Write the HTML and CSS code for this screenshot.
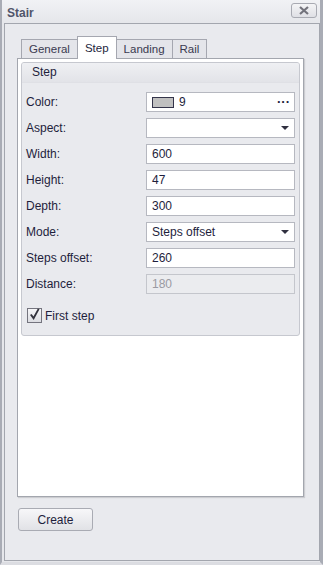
FILE: index.html
```html
<!DOCTYPE html>
<html lang="en">
<head>
  <meta charset="UTF-8">
  <title>Stair</title>
  <link rel="stylesheet" href="styles.css">
</head>
<body>
  <div class="window">
    <div class="titlebar">
      <span class="title">Stair</span>
      <button class="close-btn" aria-label="Close">
        <svg width="12" height="9" viewBox="0 0 12 9"><path d="M2 1 L10 8 M10 1 L2 8" stroke="#73737c" stroke-width="2.2" fill="none"/></svg>
      </button>
    </div>

    <div class="panel">
      <div class="tabs">
        <div class="tab">General</div>
        <div class="tab active">Step</div>
        <div class="tab">Landing</div>
        <div class="tab">Rail</div>
      </div>

      <div class="tab-page">
        <div class="group">
          <div class="group-header">Step</div>
          <div class="group-body">
            <div class="row">
              <label>Color:</label>
              <div class="field">
                <span class="swatch"></span><span class="field-text">9</span>
                <span class="dots">&middot;&middot;&middot;</span>
              </div>
            </div>
            <div class="row">
              <label>Aspect:</label>
              <div class="field"><span class="field-text"></span><span class="arrow"></span></div>
            </div>
            <div class="row">
              <label>Width:</label>
              <div class="field"><span class="field-text">600</span></div>
            </div>
            <div class="row">
              <label>Height:</label>
              <div class="field"><span class="field-text">47</span></div>
            </div>
            <div class="row">
              <label>Depth:</label>
              <div class="field"><span class="field-text">300</span></div>
            </div>
            <div class="row">
              <label>Mode:</label>
              <div class="field"><span class="field-text">Steps offset</span><span class="arrow"></span></div>
            </div>
            <div class="row">
              <label>Steps offset:</label>
              <div class="field"><span class="field-text">260</span></div>
            </div>
            <div class="row">
              <label>Distance:</label>
              <div class="field disabled"><span class="field-text">180</span></div>
            </div>
            <div class="check-row">
              <span class="checkbox">
                <svg width="14" height="14" viewBox="0 0 14 14"><path d="M3 7.5 L6 11.5 L11.5 1.5" stroke="#33333d" stroke-width="2" fill="none"/></svg>
              </span>
              <span>First step</span>
            </div>
          </div>
        </div>
      </div>

      <div class="actions">
        <button class="create-btn">Create</button>
      </div>
    </div>
  </div>
</body>
</html>
```

FILE: styles.css
```css
body {
  margin: 0;
  padding: 0;
  font-family: "Liberation Sans", Arial, sans-serif;
  font-size: 11px;
  color: #1e1e3c;
  background-color: #e6e7eb;
}

.window {
  width: 323px;
  height: 565px;
  box-sizing: border-box;
  border-left: 2px solid #a9acb5;
  border-right: 3px solid #a9acb5;
  border-bottom: 3px solid #dcdde2;
  padding: 0 0 1px 2px;
  display: flex;
  flex-direction: column;
  background: linear-gradient(#f1f2f5, #e6e7eb 22px);
}

.titlebar {
  height: 23px;
  display: flex;
  align-items: center;
  justify-content: space-between;
  padding: 0 3px 0 3px;
  box-sizing: border-box;
}

.title {
  font-weight: bold;
  font-size: 12px;
  color: #51556a;
  margin-top: 2px;
}

.close-btn {
  width: 26px;
  height: 15px;
  padding: 0;
  border: 1px solid #a8aab2;
  border-radius: 3px;
  background: linear-gradient(#f4f4f6, #dfe0e5);
  display: flex;
  align-items: center;
  justify-content: center;
  margin-bottom: 3px;
}

.panel {
  flex: 1;
  border: 1px solid #a3a6ae;
  background-color: #e9eaee;
  padding: 0 15px 0 12px;
  display: flex;
  flex-direction: column;
}

.tabs {
  display: flex;
  padding-left: 4px;
  margin-top: 14px;
  height: 20px;
  align-items: flex-end;
}

.tab {
  height: 19px;
  box-sizing: border-box;
  border: 1px solid #a5a7b0;
  border-bottom: none;
  margin-right: -1px;
  background-color: #e4e5ea;
  font-size: 11.5px;
  color: #3a3a50;
  padding: 3px 7px 0 7px;
}

.tab.active {
  height: 23px;
  background-color: #fff;
  color: #1e1e3c;
  padding-top: 5px;
  margin-bottom: -1px;
  position: relative;
  z-index: 1;
}

.tab-page {
  height: 439px;
  box-sizing: border-box;
  border: 1px solid #a3a6ae;
  background-color: #fff;
  box-shadow: 1px 1px 1px rgba(0, 0, 0, 0.12);
  padding: 3px;
}

.group {
  border: 1px solid #c6c8cf;
  border-radius: 3px;
  background-color: #e9eaee;
  overflow: hidden;
}

.group-header {
  height: 19px;
  line-height: 19px;
  padding-left: 10px;
  font-size: 12px;
  background: linear-gradient(#eff0f3, #e2e3e8);
  border-bottom: 1px solid #dfe0e5;
}

.group-body {
  padding: 9px 4px 12px 4px;
}

.row {
  display: flex;
  align-items: center;
  justify-content: space-between;
  height: 20px;
  margin-bottom: 6px;
}

.row label {
  font-size: 12px;
}

.field {
  width: 149px;
  height: 20px;
  box-sizing: border-box;
  border: 1px solid #b6b8c0;
  background-color: #fff;
  display: flex;
  align-items: center;
  padding: 0 4px 0 5px;
  font-size: 12px;
}

.field.disabled {
  background-color: #ebecef;
  border-color: #c4c6cc;
  color: #9a9aa2;
}

.field-text {
  flex: 1;
}

.swatch {
  width: 20px;
  height: 9px;
  border: 1px solid #34344a;
  background-color: #c0c0c0;
  margin-right: 5px;
}

.dots {
  font-weight: bold;
  font-size: 13px;
  line-height: 10px;
}

.arrow {
  width: 0;
  height: 0;
  border-left: 4px solid transparent;
  border-right: 4px solid transparent;
  border-top: 4px solid #303040;
  margin-right: 1px;
}

.check-row {
  display: flex;
  align-items: center;
  gap: 3px;
  font-size: 12px;
  margin-top: 14px;
  padding-left: 1px;
}

.checkbox {
  width: 13px;
  height: 13px;
  border: 1px solid #74747e;
  background: linear-gradient(#f6f6f8, #dcdde2);
  display: flex;
}

.checkbox svg {
  margin-top: -2px;
}

.actions {
  padding-top: 11px;
}

.create-btn {
  width: 75px;
  height: 23px;
  font-family: "Liberation Sans", Arial, sans-serif;
  font-size: 12px;
  color: #1e1e3c;
  border: 1px solid #a9abb3;
  border-radius: 3px;
  background: linear-gradient(#f7f7f9, #e1e2e6);
  margin-left: 1px;
  padding: 0;
}
```
